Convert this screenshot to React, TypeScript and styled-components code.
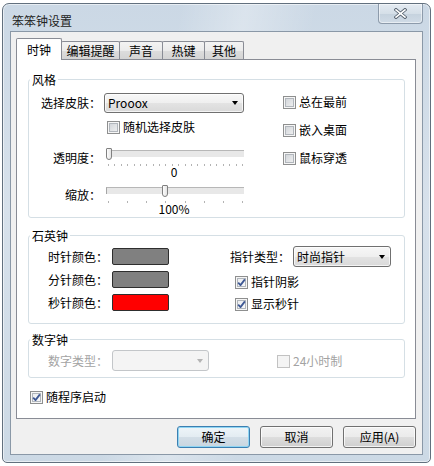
import React from "react";
import styled, { createGlobalStyle, css } from "styled-components";

const FONT = `"Noto Sans CJK SC", "Noto Sans", "DejaVu Sans", sans-serif`;

const GlobalStyle = createGlobalStyle`
  html, body { margin: 0; padding: 0; background: #ffffff; }
  body { font-family: ${FONT}; font-size: 12px; color: #000; }
  * { box-sizing: border-box; }
`;

const Page = styled.div`
  width: 434px;
  height: 466px;
  padding: 3px 3px 3px 2px;
  display: flex;
`;

const Window = styled.div`
  flex: 1;
  display: flex;
  flex-direction: column;
  padding: 0 7px 7px 7px;
  border: 1px solid #62707e;
  border-radius: 7px 7px 5px 5px;
  background:
    linear-gradient(100deg, rgba(255,255,255,0) 35%, rgba(255,255,255,0.3) 48%, rgba(255,255,255,0) 62%),
    linear-gradient(180deg, #cbd8e5 0%, #d7e1eb 45%, #ccd9e5 100%);
  box-shadow: inset 0 0 0 1px rgba(255,255,255,0.55);
`;

const TitleBar = styled.div`
  height: 27px;
  display: flex;
  align-items: flex-start;
  padding-left: 2px;
`;

const TitleText = styled.div`
  flex: 1;
  margin-top: 9px;
  line-height: 16px;
  color: #222;
`;

const CloseButton = styled.div`
  width: 45px;
  height: 20px;
  display: flex;
  align-items: center;
  justify-content: center;
  border: 1px solid #8d9bab;
  border-top: none;
  border-radius: 0 0 4px 4px;
  background: linear-gradient(180deg, #e4ebf2 0%, #d5dfe8 50%, #c5d2de 51%, #d0dbe6 100%);
  box-shadow: inset 0 0 0 1px rgba(255,255,255,0.5);
`;

const Client = styled.div`
  flex: 1;
  display: flex;
  flex-direction: column;
  border: 1px solid #8a98a7;
  background: #f0f0f0;
  padding: 6px 6px 6px 5px;
`;

const TabStrip = styled.div`
  display: flex;
  align-items: flex-end;
  height: 22px;
  margin-bottom: -1px;
  position: relative;
  z-index: 1;
`;

const Tab = styled.div<{ $active?: boolean; $w: number }>`
  width: ${(p) => p.$w}px;
  height: 18px;
  margin-bottom: 1px;
  margin-left: -1px;
  padding-top: 1px;
  border: 1px solid #898c95;
  border-bottom: none;
  border-radius: 2px 2px 0 0;
  background: linear-gradient(180deg, #f3f3f3 0%, #ebebeb 50%, #dddddd 51%, #d4d4d4 100%);
  text-align: center;
  line-height: 16px;
  white-space: nowrap;
  &:first-child { margin-left: 0; }
  ${(p) =>
    p.$active &&
    css`
      height: 22px;
      margin-bottom: 0;
      padding-top: 3px;
      background: #ffffff;
      position: relative;
      z-index: 2;
    `}
`;

const Panel = styled.div`
  flex: 1;
  display: flex;
  flex-direction: column;
  border: 1px solid #898c95;
  background: #ffffff;
  padding: 19px 10px 0 11px;
`;

const Group = styled.div<{ $mt?: number }>`
  position: relative;
  margin-top: ${(p) => p.$mt ?? 0}px;
  border: 1px solid #d5dfe5;
  border-radius: 3px;
`;

const GroupLabel = styled.span`
  position: absolute;
  top: -8px;
  left: 1px;
  padding: 0 2px;
  background: #ffffff;
  line-height: 16px;
`;

const GroupBody = styled.div<{ $pt: number; $pb: number }>`
  display: flex;
  align-items: flex-start;
  padding: ${(p) => p.$pt}px 0 ${(p) => p.$pb}px 0;
`;

const Column = styled.div<{ $ml?: number; $mt?: number }>`
  display: flex;
  flex-direction: column;
  margin-left: ${(p) => p.$ml ?? 0}px;
  margin-top: ${(p) => p.$mt ?? 0}px;
`;

const FieldRow = styled.div<{ $mt?: number; $gap?: number; $top?: boolean }>`
  display: flex;
  align-items: ${(p) => (p.$top ? "flex-start" : "center")};
  gap: ${(p) => p.$gap ?? 3}px;
  margin-top: ${(p) => p.$mt ?? 0}px;
`;

const FieldLabel = styled.span<{ $w?: number; $disabled?: boolean; $pt?: number }>`
  ${(p) => (p.$w ? `width: ${p.$w}px;` : "")}
  flex-shrink: 0;
  text-align: right;
  line-height: 16px;
  white-space: nowrap;
  padding-top: ${(p) => p.$pt ?? 0}px;
  color: ${(p) => (p.$disabled ? "#a3a3a3" : "#000")};
`;

const Combo = styled.div<{ $w: number; $h: number; $disabled?: boolean }>`
  width: ${(p) => p.$w}px;
  height: ${(p) => p.$h}px;
  display: flex;
  align-items: center;
  padding: 0 5px 0 3px;
  border: 1px solid #707070;
  border-radius: 3px;
  background: linear-gradient(180deg, #f7f7f7 0%, #efefef 50%, #e3e3e3 51%, #d9d9d9 100%);
  box-shadow: inset 0 0 0 1px rgba(255,255,255,0.7);
  line-height: 16px;
  ${(p) =>
    p.$disabled &&
    css`
      border-color: #c3c6c9;
      background: #f4f4f4;
      box-shadow: none;
    `}
`;

const ComboText = styled.span`
  flex: 1;
  white-space: nowrap;
`;

const ComboArrow = styled.span<{ $disabled?: boolean }>`
  width: 0;
  height: 0;
  border-left: 3.5px solid transparent;
  border-right: 3.5px solid transparent;
  border-top: 4px solid ${(p) => (p.$disabled ? "#b4b4b4" : "#000")};
`;

const CheckRow = styled.div<{ $ml?: number; $mt?: number; $disabled?: boolean }>`
  display: flex;
  align-items: center;
  gap: 3px;
  line-height: 16px;
  white-space: nowrap;
  margin-left: ${(p) => p.$ml ?? 0}px;
  margin-top: ${(p) => p.$mt ?? 0}px;
  color: ${(p) => (p.$disabled ? "#a3a3a3" : "#000")};
`;

const CheckBoxBox = styled.span<{ $disabled?: boolean; $checked?: boolean }>`
  width: 13px;
  height: 13px;
  flex-shrink: 0;
  display: flex;
  align-items: center;
  justify-content: center;
  border: 1px solid #8e8f8f;
  background: ${(p) =>
    p.$checked
      ? "linear-gradient(135deg, #e9ebee 0%, #fbfbfb 100%)"
      : "linear-gradient(135deg, #ccd0d5 0%, #f4f4f4 100%)"};
  box-shadow: inset 0 0 0 1px #f6f6f6, inset 0 0 0 2px #b1b6bc;
  ${(p) =>
    p.$disabled &&
    css`
      border-color: #c2c2c2;
      background: #f4f4f4;
      box-shadow: none;
    `}
`;

const Swatch = styled.div<{ $color: string }>`
  width: 57px;
  height: 17px;
  border: 1px solid #2e2e2e;
  border-radius: 2px;
  background: ${(p) => p.$color};
`;

const SliderBox = styled.div`
  width: 140px;
  display: flex;
  flex-direction: column;
`;

const SliderTrack = styled.div`
  position: relative;
  height: 12px;
`;

const Rail = styled.div`
  margin: 2px 0 0 2px;
  height: 7px;
  background: #e8e8e8;
  border-top: 1px solid #b7b7b7;
  border-left: 1px solid #a6a6a6;
`;

const Thumb = styled.div`
  position: absolute;
  top: 0;
  width: 6px;
  height: 12px;
  border: 1px solid #808080;
  border-radius: 1px 1px 3px 3px;
  background: linear-gradient(90deg, #fdfdfd 0%, #e4e4e4 100%);
`;

const Ticks = styled.div`
  margin-top: 4px;
  height: 2px;
  display: flex;
  justify-content: space-between;
  padding: 0 1px 0 4px;
`;

const Tick = styled.span`
  width: 1px;
  height: 2px;
  background: #b3b3b3;
`;

const SliderValue = styled.div`
  text-align: center;
  line-height: 12px;
  font-size: 12px;
`;

const ButtonRow = styled.div`
  margin-top: 7px;
  display: flex;
  justify-content: flex-end;
  gap: 10px;
`;

const Button = styled.div<{ $default?: boolean }>`
  width: 73px;
  height: 22px;
  border: 1px solid #707070;
  border-radius: 3px;
  background: linear-gradient(180deg, #f2f2f2 0%, #ebebeb 50%, #dddddd 51%, #cfcfcf 100%);
  box-shadow: inset 0 0 0 1px rgba(255,255,255,0.75);
  text-align: center;
  line-height: 20px;
  ${(p) =>
    p.$default &&
    css`
      border-color: #3c7fb1;
      background: linear-gradient(180deg, #eef5f9 0%, #e3ecf2 50%, #d3dee7 51%, #c9d6e0 100%);
      box-shadow: inset 0 0 0 1px #8fd5f3;
    `}
`;

type CheckProps = {
  label: string;
  checked?: boolean;
  disabled?: boolean;
  ml?: number;
  mt?: number;
};

const Check = ({ label, checked, disabled, ml, mt }: CheckProps) => (
  <CheckRow $ml={ml} $mt={mt} $disabled={disabled}>
    <CheckBoxBox $checked={checked} $disabled={disabled}>
      {checked && (
        <svg width="11" height="11" viewBox="0 0 11 11">
          <path d="M2.2 5.6 L4.5 8.1 L8.9 2.4" fill="none" stroke="#3e5894" strokeWidth="1.8" strokeLinejoin="round" />
        </svg>
      )}
    </CheckBoxBox>
    <span>{label}</span>
  </CheckRow>
);

type SliderProps = { pos: number; ticks: number; value: string };

const Slider = ({ pos, ticks, value }: SliderProps) => (
  <SliderBox>
    <SliderTrack>
      <Rail />
      <Thumb style={{ left: `${pos}px` }} />
    </SliderTrack>
    <Ticks>
      {Array.from({ length: ticks }).map((_, i) => (
        <Tick key={i} />
      ))}
    </Ticks>
    <SliderValue>{value}</SliderValue>
  </SliderBox>
);

const tabs = [
  { label: "时钟", w: 46, active: true },
  { label: "编辑提醒", w: 59 },
  { label: "声音", w: 44 },
  { label: "热键", w: 43 },
  { label: "其他", w: 40 },
];

export default function App() {
  return (
    <>
      <GlobalStyle />
      <Page>
        <Window>
          <TitleBar>
            <TitleText>笨笨钟设置</TitleText>
            <CloseButton>
              <svg width="13" height="11" viewBox="0 0 13 11">
                <path d="M2 1.8 L11 9.2 M11 1.8 L2 9.2" stroke="#56626f" strokeWidth="3.4" strokeLinecap="square" />
                <path d="M2 1.8 L11 9.2 M11 1.8 L2 9.2" stroke="#ffffff" strokeWidth="1.6" strokeLinecap="square" />
              </svg>
            </CloseButton>
          </TitleBar>
          <Client>
            <TabStrip>
              {tabs.map((t) => (
                <Tab key={t.label} $w={t.w} $active={t.active}>
                  {t.label}
                </Tab>
              ))}
            </TabStrip>
            <Panel>
              <Group>
                <GroupLabel>风格</GroupLabel>
                <GroupBody $pt={13} $pb={2}>
                  <Column>
                    <FieldRow>
                      <FieldLabel $w={72}>选择皮肤：</FieldLabel>
                      <Combo $w={140} $h={20}>
                        <ComboText>Prooox</ComboText>
                        <ComboArrow />
                      </Combo>
                    </FieldRow>
                    <Check label="随机选择皮肤" ml={78} mt={6} />
                    <FieldRow $mt={13} $top>
                      <FieldLabel $w={72} $pt={2}>透明度：</FieldLabel>
                      <Slider pos={2} ticks={22} value="0" />
                    </FieldRow>
                    <FieldRow $mt={7} $top>
                      <FieldLabel $w={72} $pt={2}>缩放：</FieldLabel>
                      <Slider pos={58} ticks={8} value="100%" />
                    </FieldRow>
                  </Column>
                  <Column $ml={39} $mt={1}>
                    <Check label="总在最前" />
                    <Check label="嵌入桌面" mt={12} />
                    <Check label="鼠标穿透" mt={12} />
                  </Column>
                </GroupBody>
              </Group>

              <Group $mt={17}>
                <GroupLabel>石英钟</GroupLabel>
                <GroupBody $pt={12} $pb={11}>
                  <Column>
                    <FieldRow $gap={4}>
                      <FieldLabel $w={79}>时针颜色：</FieldLabel>
                      <Swatch $color="#808080" />
                    </FieldRow>
                    <FieldRow $gap={4} $mt={6}>
                      <FieldLabel $w={79}>分针颜色：</FieldLabel>
                      <Swatch $color="#808080" />
                    </FieldRow>
                    <FieldRow $gap={4} $mt={6}>
                      <FieldLabel $w={79}>秒针颜色：</FieldLabel>
                      <Swatch $color="#ff0000" />
                    </FieldRow>
                  </Column>
                  <Column $ml={61} $mt={-2}>
                    <FieldRow>
                      <FieldLabel>指针类型：</FieldLabel>
                      <Combo $w={98} $h={21}>
                        <ComboText>时尚指针</ComboText>
                        <ComboArrow />
                      </Combo>
                    </FieldRow>
                    <Check label="指针阴影" checked ml={5} mt={7} />
                    <Check label="显示秒针" checked ml={5} mt={6} />
                  </Column>
                </GroupBody>
              </Group>

              <Group $mt={15}>
                <GroupLabel>数字钟</GroupLabel>
                <GroupBody $pt={10} $pb={6}>
                  <FieldRow $gap={4}>
                    <FieldLabel $w={79} $disabled>数字类型：</FieldLabel>
                    <Combo $w={97} $h={21} $disabled>
                      <ComboText />
                      <ComboArrow $disabled />
                    </Combo>
                  </FieldRow>
                  <Check label="24小时制" disabled ml={68} mt={3} />
                </GroupBody>
              </Group>

              <Check label="随程序启动" checked ml={2} mt={11} />
            </Panel>
            <ButtonRow>
              <Button $default>确定</Button>
              <Button>取消</Button>
              <Button>应用(A)</Button>
            </ButtonRow>
          </Client>
        </Window>
      </Page>
    </>
  );
}
